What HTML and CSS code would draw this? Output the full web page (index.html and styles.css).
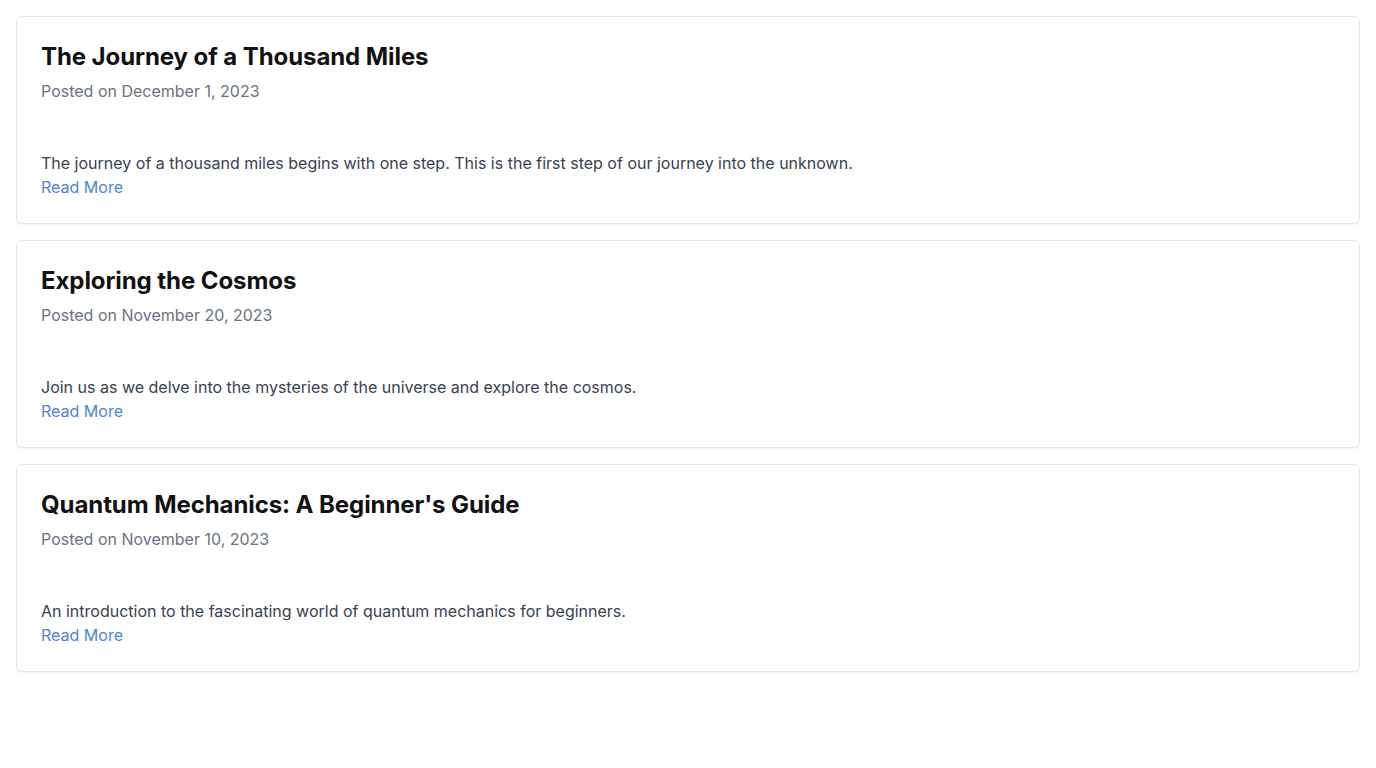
FILE: index.html
```html
<!DOCTYPE html>
<html>
<head>
<meta charset="utf-8">
<link rel="stylesheet" href="styles.css">
</head>
<body>
<main class="list">
  <article class="card">
    <h2 class="title">The Journey of a Thousand Miles</h2>
    <p class="date">Posted on December 1, 2023</p>
    <p class="excerpt">The journey of a thousand miles begins with one step. This is the first step of our journey into the unknown.</p>
    <a class="more" href="#">Read More</a>
  </article>
  <article class="card">
    <h2 class="title">Exploring the Cosmos</h2>
    <p class="date">Posted on November 20, 2023</p>
    <p class="excerpt">Join us as we delve into the mysteries of the universe and explore the cosmos.</p>
    <a class="more" href="#">Read More</a>
  </article>
  <article class="card">
    <h2 class="title">Quantum Mechanics: A Beginner's Guide</h2>
    <p class="date">Posted on November 10, 2023</p>
    <p class="excerpt">An introduction to the fascinating world of quantum mechanics for beginners.</p>
    <a class="more" href="#">Read More</a>
  </article>
</main>
</body>
</html>
```

FILE: styles.css
```css
html, body {
  margin: 0;
  padding: 0;
  background: #fff;
}
body {
  font-family: Inter, "Liberation Sans", sans-serif;
}
.list {
  padding: 16px;
  display: flex;
  flex-direction: column;
  gap: 16px;
}
.card {
  border: 1px solid #e5e7eb;
  border-radius: 6px;
  box-shadow: 0 1px 2px rgba(0, 0, 0, 0.05);
  padding: 24px;
  display: flex;
  flex-direction: column;
  align-items: flex-start;
}
.title {
  margin: 0;
  font-size: 24px;
  line-height: 32px;
  font-weight: 700;
  letter-spacing: -0.08px;
  color: #111;
}
.date {
  margin: 6px 0 0;
  font-size: 16px;
  line-height: 24px;
  color: #6b7280;
}
.excerpt {
  margin: 48px 0 0;
  font-size: 16px;
  line-height: 24px;
  color: #374151;
}
.more {
  font-size: 16px;
  line-height: 24px;
  color: #4a86d8;
  text-decoration: none;
}
```
